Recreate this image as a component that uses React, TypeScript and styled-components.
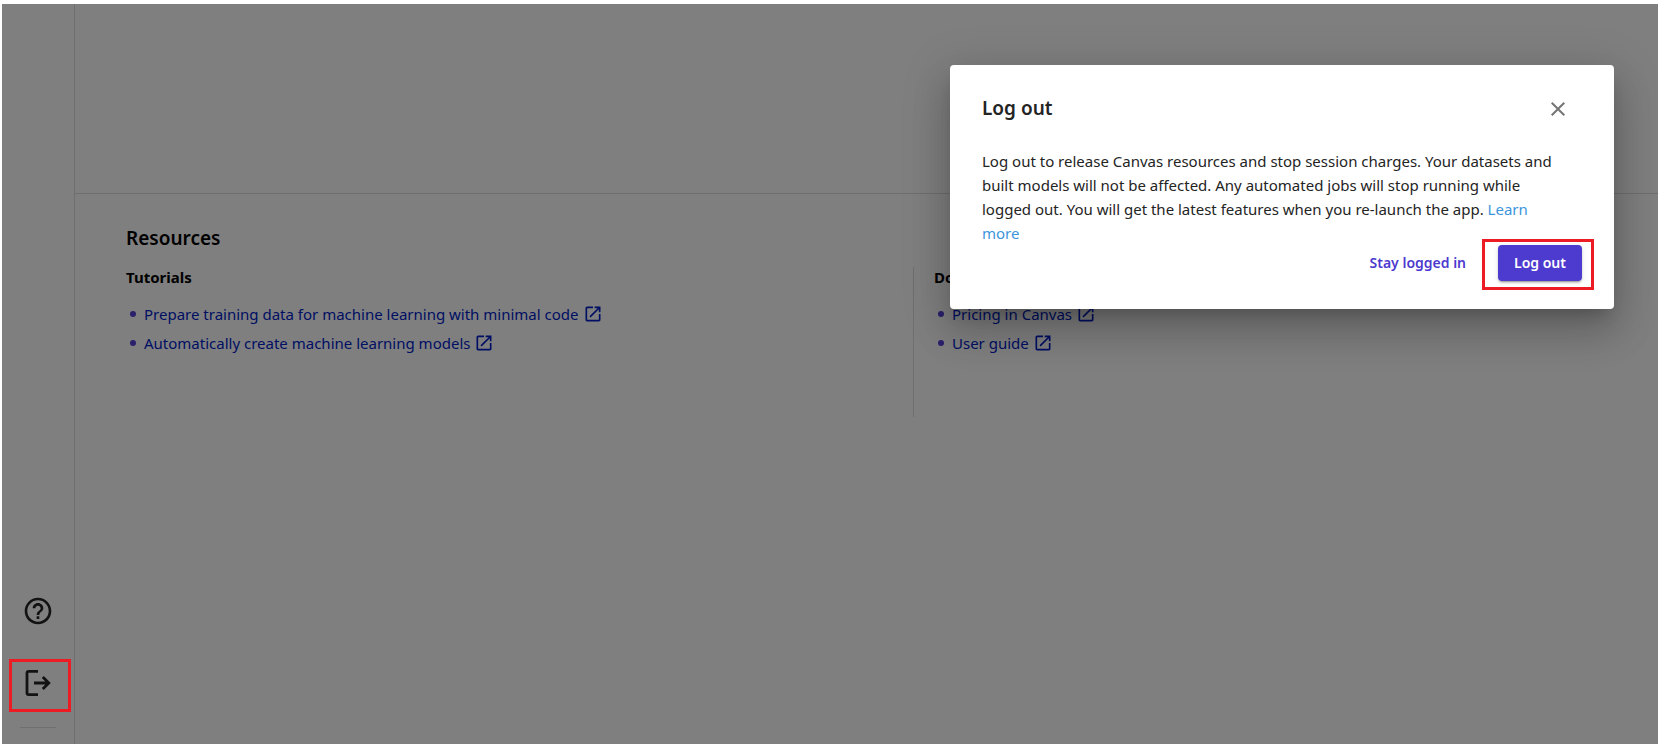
import React from "react";
import styled, { createGlobalStyle } from "styled-components";

const GlobalStyle = createGlobalStyle`
  *, *::before, *::after { box-sizing: border-box; }
  body {
    margin: 0;
    background: #fff;
    color: #000;
    font-family: "Noto Sans", "Open Sans", sans-serif;
    font-size: 15px;
    line-height: 24px;
  }
  h1, h2, h3, p, ul { margin: 0; padding: 0; }
`;

const Page = styled.div`
  min-height: 100vh;
  padding: 4px 0 0 2px;
  display: flex;
`;

const Shell = styled.div`
  position: relative;
  flex: 1;
  display: flex;
`;

const Sidebar = styled.nav`
  width: 73px;
  flex: none;
  padding: 0 3px 16px 7px;
  border-right: 1px solid #dedede;
  display: flex;
  flex-direction: column;
  justify-content: flex-end;
`;

const NavGroup = styled.div`
  display: flex;
  flex-direction: column;
  gap: 19px;
  margin-bottom: 15px;
`;

const NavButton = styled.button`
  position: relative;
  height: 53px;
  padding: 0 4px 5px 0;
  border: 0;
  background: none;
  color: #242424;
  display: flex;
  align-items: center;
  justify-content: center;

  svg { width: 32px; height: 32px; fill: currentColor; }
`;

const Highlight = styled.span<{ $inset: string }>`
  position: absolute;
  inset: ${(p) => p.$inset};
  z-index: 3;
  border: 3px solid #ed1c24;
  pointer-events: none;
`;

const NavDivider = styled.hr`
  width: 36px;
  height: 1px;
  margin: 0 0 0 11px;
  border: 0;
  background: #dedede;
`;

const Main = styled.main`
  flex: 1;
  min-width: 0;
  display: flex;
  flex-direction: column;
`;

const Banner = styled.div`
  height: 190px;
  border-bottom: 1px solid #dcdcdc;
`;

const Resources = styled.section`
  padding: 30px 0 0 51px;
`;

const SectionTitle = styled.h2`
  font-size: 19px;
  line-height: 28px;
  font-weight: 600;
`;

const Columns = styled.div`
  display: grid;
  grid-template-columns: 787fr 745fr;
  margin-top: 15px;
`;

const Column = styled.div`
  min-height: 150px;

  & + & {
    border-left: 1px solid #dedede;
    padding-left: 20px;
  }
`;

const ColumnTitle = styled.h3`
  font-size: 15px;
  line-height: 20px;
  font-weight: 700;
`;

const LinkList = styled.ul`
  list-style: none;
  margin-top: 12px;
`;

const LinkItem = styled.li`
  display: flex;
  align-items: center;
  height: 29px;
  padding-left: 4px;

  &::before {
    content: "";
    width: 6px;
    height: 6px;
    margin-right: 8px;
    border-radius: 50%;
    background: #5540d8;
  }
`;

const ResourceAnchor = styled.a`
  display: flex;
  align-items: center;
  gap: 4px;
  color: #001cc8;
  text-decoration: none;

  svg { width: 20px; height: 20px; fill: currentColor; }
`;

const Backdrop = styled.div`
  position: absolute;
  inset: 0;
  z-index: 1;
  background: rgba(0, 0, 0, 0.5);
`;

const Dialog = styled.div`
  position: absolute;
  top: 61px;
  right: 44px;
  z-index: 2;
  width: 664px;
  max-width: calc(100% - 88px);
  padding: 32px 32px 28px;
  border-radius: 4px;
  background: #fff;
  color: #242424;
  box-shadow: 0 11px 15px -7px rgba(0, 0, 0, 0.2),
    0 24px 38px 3px rgba(0, 0, 0, 0.14), 0 9px 46px 8px rgba(0, 0, 0, 0.12);
`;

const DialogHeader = styled.header`
  display: flex;
  align-items: flex-start;
  justify-content: space-between;
  padding-right: 12px;
`;

const DialogTitle = styled.h1`
  font-size: 19px;
  line-height: 22px;
  font-weight: 600;
`;

const CloseButton = styled.button`
  padding: 0;
  border: 0;
  background: none;
  color: #757575;
  display: flex;

  svg { width: 24px; height: 24px; fill: currentColor; }
`;

const DialogText = styled.p`
  margin-top: 28px;
  padding-right: 16px;

  a { color: #3d95dc; text-decoration: none; }
`;

const Actions = styled.footer`
  display: flex;
  justify-content: flex-end;
  gap: 16px;
`;

const ActionButton = styled.button<{ $primary?: boolean }>`
  position: relative;
  height: 36px;
  padding: 0 16px;
  border: 0;
  border-radius: 4px;
  font: 600 14px/24px "Noto Sans", "Open Sans", sans-serif;
  color: ${(p) => (p.$primary ? "#fff" : "#4d3acf")};
  background: ${(p) => (p.$primary ? "#4d3acf" : "none")};
  box-shadow: ${(p) =>
    p.$primary
      ? "0 3px 1px -2px rgba(0,0,0,.2), 0 2px 2px rgba(0,0,0,.14), 0 1px 5px rgba(0,0,0,.12)"
      : "none"};
`;

const OpenIcon = () => (
  <svg viewBox="0 0 24 24" aria-hidden="true">
    <path d="M19 19H5V5h7V3H5c-1.11 0-2 .9-2 2v14c0 1.1.89 2 2 2h14c1.1 0 2-.9 2-2v-7h-2v7zM14 3v2h3.59l-9.83 9.83 1.41 1.41L19 6.41V10h2V3h-7z" />
  </svg>
);

const HelpIcon = () => (
  <svg viewBox="0 0 24 24" aria-hidden="true">
    <path d="M11 18h2v-2h-2v2zm1-16C6.48 2 2 6.48 2 12s4.48 10 10 10 10-4.48 10-10S17.52 2 12 2zm0 18c-4.41 0-8-3.59-8-8s3.59-8 8-8 8 3.59 8 8-3.59 8-8 8zm0-14c-2.21 0-4 1.79-4 4h2c0-1.1.9-2 2-2s2 .9 2 2c0 2-3 1.75-3 5h2c0-2.25 3-2.5 3-5 0-2.21-1.79-4-4-4z" />
  </svg>
);

const LogoutIcon = () => (
  <svg viewBox="0 0 32 32" aria-hidden="true">
    <path
      d="M16 4.4H6.6Q5 4.4 5 6V26Q5 27.600 6.600 27.600H16M12 16H27M20.800 10L26.800 16L20.800 22"
      fill="none"
      stroke="currentColor"
      strokeWidth="2.8"
    />
  </svg>
);

const CloseIcon = () => (
  <svg viewBox="0 0 24 24" aria-hidden="true">
    <path d="M19 6.41L17.59 5 12 10.59 6.41 5 5 6.41 10.59 12 5 17.59 6.41 19 12 13.41 17.59 19 19 17.59 13.41 12z" />
  </svg>
);

const columns = [
  {
    title: "Tutorials",
    links: [
      "Prepare training data for machine learning with minimal code",
      "Automatically create machine learning models",
    ],
  },
  { title: "Documentation", links: ["Pricing in Canvas", "User guide"] },
];

export default function App() {
  return (
    <>
      <GlobalStyle />
      <Page>
        <Shell>
          <Sidebar>
            <NavGroup>
              <NavButton aria-label="Help">
                <HelpIcon />
              </NavButton>
              <NavButton aria-label="Log out">
                <LogoutIcon />
                <Highlight $inset="0" />
              </NavButton>
            </NavGroup>
            <NavDivider />
          </Sidebar>
          <Main>
            <Banner />
            <Resources>
              <SectionTitle>Resources</SectionTitle>
              <Columns>
                {columns.map((column) => (
                  <Column key={column.title}>
                    <ColumnTitle>{column.title}</ColumnTitle>
                    <LinkList>
                      {column.links.map((link) => (
                        <LinkItem key={link}>
                          <ResourceAnchor href="#">
                            {link}
                            <OpenIcon />
                          </ResourceAnchor>
                        </LinkItem>
                      ))}
                    </LinkList>
                  </Column>
                ))}
              </Columns>
            </Resources>
          </Main>
          <Backdrop />
          <Dialog role="dialog" aria-modal="true" aria-labelledby="logout-title">
            <DialogHeader>
              <DialogTitle id="logout-title">Log out</DialogTitle>
              <CloseButton aria-label="Close">
                <CloseIcon />
              </CloseButton>
            </DialogHeader>
            <DialogText>
              Log out to release Canvas resources and stop session charges. Your
              datasets and built models will not be affected. Any automated jobs
              will stop running while logged out. You will get the latest
              features when you re-launch the app. <a href="#">Learn more</a>
            </DialogText>
            <Actions>
              <ActionButton>Stay logged in</ActionButton>
              <ActionButton $primary>
                Log out
                <Highlight $inset="-6px -12px -9px -16px" />
              </ActionButton>
            </Actions>
          </Dialog>
        </Shell>
      </Page>
    </>
  );
}
